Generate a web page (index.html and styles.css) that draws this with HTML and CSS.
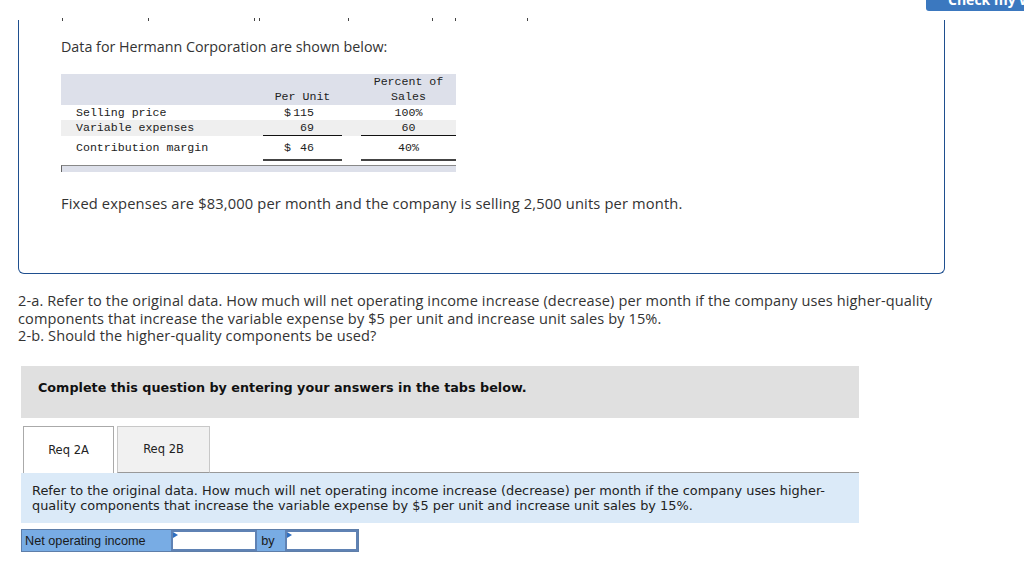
FILE: index.html
```html
<!DOCTYPE html>
<html>
<head>
<meta charset="utf-8">
<link rel="stylesheet" href="styles.css">
</head>
<body>
<div class="topbar">
  <div class="ticks"><i></i><i></i><i></i><i></i><i></i><i></i><i></i><i></i></div>
  <div class="check-btn"><span>Check my work</span></div>
</div>
<div class="card">
  <p class="intro">Data for Hermann Corporation are shown below:</p>
  <div class="fin">
    <div class="row head">
      <div class="lbl"></div>
      <div class="pu">Per Unit</div>
      <div class="gap"></div>
      <div class="pct">Percent of<br>Sales</div>
    </div>
    <div class="row">
      <div class="lbl">Selling price</div>
      <div class="pu num"><span>$</span><span>115</span></div>
      <div class="gap"></div>
      <div class="pct">100%</div>
    </div>
    <div class="row alt">
      <div class="lbl">Variable expenses</div>
      <div class="pu num single"><span></span><span>69</span></div>
      <div class="gap"></div>
      <div class="pct single">60</div>
    </div>
    <div class="row total">
      <div class="lbl">Contribution margin</div>
      <div class="pu num double"><span>$</span><span>46</span></div>
      <div class="gap"></div>
      <div class="pct double">40%</div>
    </div>
    <div class="scrollbar"></div>
  </div>
  <p class="fixed">Fixed expenses are $83,000 per month and the company is selling 2,500 units per month.</p>
</div>

<div class="question">
  <div class="qline">2-a. Refer to the original data. How much will net operating income increase (decrease) per month if the company uses higher-quality</div>
  <div class="qline">components that increase the variable expense by $5 per unit and increase unit sales by 15%.</div>
  <div class="qline">2-b. Should the higher-quality components be used?</div>
</div>

<div class="instructions">Complete this question by entering your answers in the tabs below.</div>

<div class="tabs">
  <div class="tab active">Req 2A</div>
  <div class="tab">Req 2B</div>
  <div class="tab-fill"></div>
</div>
<div class="panel">Refer to the original data. How much will net operating income increase (decrease) per month if the company uses higher-<br>quality components that increase the variable expense by $5 per unit and increase unit sales by 15%.</div>

<div class="answer">
  <div class="a-label">Net operating income</div>
  <div class="a-input wide"><span class="flag"></span></div>
  <div class="a-by">by</div>
  <div class="a-input narrow"><span class="flag"></span></div>
</div>
</body>
</html>
```

FILE: styles.css
```css
* { box-sizing: border-box; }
html, body { margin: 0; padding: 0; background: #fff; }
body { font-family: "Open Sans", Roboto, sans-serif; color: #333; width: 1024px; height: 562px; overflow: hidden; }

.topbar { height: 20px; display: flex; align-items: flex-start; }
.ticks { display: flex; margin-top: 18px; height: 3px; }
.ticks i { display: block; width: 1px; height: 3px; background: #444; }
.ticks i:nth-child(1) { margin-left: 62px; }
.ticks i:nth-child(2) { margin-left: 85px; }
.ticks i:nth-child(3) { margin-left: 105px; }
.ticks i:nth-child(4) { margin-left: 4px; }
.ticks i:nth-child(5) { margin-left: 88px; }
.ticks i:nth-child(6) { margin-left: 83px; }
.ticks i:nth-child(7) { margin-left: 22px; }
.ticks i:nth-child(8) { margin-left: 71px; }

.check-btn { margin-left: auto; width: 98px; height: 11px; background: #3b78bf; border-radius: 0 0 0 3px; overflow: hidden; color: #fff; font: bold 14px "Open Sans", sans-serif; line-height: 14px; padding-left: 22px; }
.check-btn span { display: block; margin-top: -7px; white-space: nowrap; }

.card { margin-left: 18px; width: 927px; height: 254px; border: 1px solid #1f4f8f; border-top: none; border-radius: 0 0 6px 6px; padding-left: 42px; padding-top: 18px; }
.intro { margin: 0; font-size: 14.3px; line-height: 18px; }

.fin { margin-top: 18px; width: 395px; font-family: "Liberation Mono", "DejaVu Sans Mono", monospace; font-size: 11.6px; line-height: 15px; color: #222; }
.row { display: grid; grid-template-columns: 202px 79px 19px 95px; }
.row.head { background: #dde0ea; height: 31px; }
.row.head .pu, .row.head .pct { display: flex; align-items: flex-end; justify-content: center; text-align: center; padding-bottom: 1px; }
.row.head .pct { flex-direction: column; align-items: center; justify-content: flex-start; }
.lbl { padding-left: 15px; white-space: nowrap; }
.pct { text-align: center; }
.num { display: flex; justify-content: space-between; padding-left: 21px; padding-right: 28px; }
.row.alt { background: #efefef; }
.single { border-bottom: 1px solid #111; }
.row.total { height: 25px; }
.row.total > div { padding-top: 4px; }
.double { border-bottom: 2px solid #444; }
.scrollbar { margin-top: 4px; height: 7px; background: #dde0ea; border-top: 1px solid #888; border-left: 1px solid #666; }

.fixed { margin: 22px 0 0; font-size: 14.7px; line-height: 18px; letter-spacing: 0.14px; }

.question { margin: 18px 0 0 18px; font-size: 14.55px; color: #333; letter-spacing: 0.11px; }
.qline { height: 17.5px; line-height: 17.5px; white-space: nowrap; }

.instructions { margin: 21px 0 0 21px; width: 838px; height: 52px; background: #e0e0e0; padding: 14px 0 0 17px; font: bold 12.75px "DejaVu Sans", Verdana, sans-serif; color: #111; }

.tabs { display: flex; margin: 8px 0 0 21px; width: 838px; height: 47px; }
.tab { width: 93px; height: 47px; border: 1px solid #c8c8c8; border-bottom: 1px solid #999; background: #f1f1f1; font: 11.5px "DejaVu Sans", Verdana, sans-serif; color: #222; display: flex; align-items: center; justify-content: center; margin-left: 3px; }
.tab.active { width: 91px; margin-left: 2px; background: #fff; border-color: #aaa; border-bottom: none; }
.tab-fill { flex: 1; border-bottom: 1px solid #999; }

.panel { margin-left: 21px; width: 838px; height: 50px; background: #dbeaf8; padding: 10px 0 0 11px; font: 12.9px "DejaVu Sans", Verdana, sans-serif; line-height: 15px; color: #222; }

.answer { display: flex; margin: 6px 0 0 21px; width: 338px; height: 23px; background: #78ace4; border: 1px solid #5e7ea9; }
.a-label { width: 149px; font: 12.7px "Liberation Sans", Arial, sans-serif; color: #1a1a1a; padding: 4px 0 0 3px; }
.a-input { position: relative; background: #fff; border: 2px solid #5f82b4; margin: 0; }
.a-input.wide { width: 87px; }
.a-input.narrow { width: 73px; }
.a-by { width: 28px; font: 12.7px "Liberation Sans", Arial, sans-serif; color: #1a1a1a; padding: 4px 0 0 4px; }
.flag { position: absolute; left: 0; top: 0; width: 0; height: 0; border-top: 3px solid transparent; border-bottom: 3px solid transparent; border-left: 5px solid #2f6fc0; }
```
